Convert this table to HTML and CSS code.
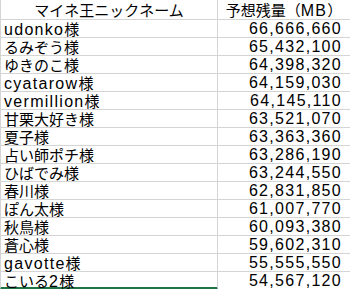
FILE: index.html
```html
<!DOCTYPE html>
<html lang="ja">
<head>
<meta charset="utf-8">
<link rel="stylesheet" href="styles.css">
</head>
<body>
<div class="sheet">
  <div class="cell head name">マイネ王ニックネーム</div>
  <div class="cell head num">予想残量（<span class="lt">MB</span>）</div>

  <div class="cell name"><span class="lt">udonko</span>様</div><div class="cell num lt">66,666,660</div>
  <div class="cell name">るみぞう様</div><div class="cell num lt">65,432,100</div>
  <div class="cell name">ゆきのこ様</div><div class="cell num lt">64,398,320</div>
  <div class="cell name"><span class="lt">cyatarow</span>様</div><div class="cell num lt">64,159,030</div>
  <div class="cell name"><span class="lt">vermillion</span>様</div><div class="cell num lt">64,145,110</div>
  <div class="cell name">甘栗大好き様</div><div class="cell num lt">63,521,070</div>
  <div class="cell name">夏子様</div><div class="cell num lt">63,363,360</div>
  <div class="cell name">占い師ポチ様</div><div class="cell num lt">63,286,190</div>
  <div class="cell name">ひばでみ様</div><div class="cell num lt">63,244,550</div>
  <div class="cell name">春川様</div><div class="cell num lt">62,831,850</div>
  <div class="cell name">ぽん太様</div><div class="cell num lt">61,007,770</div>
  <div class="cell name">秋鳥様</div><div class="cell num lt">60,093,380</div>
  <div class="cell name">蒼心様</div><div class="cell num lt">59,602,310</div>
  <div class="cell name"><span class="lt">gavotte</span>様</div><div class="cell num lt">55,555,550</div>
  <div class="cell name last">こいる<span class="lt">2</span>様</div><div class="cell num lt">54,567,120</div>
</div>
</body>
</html>
```
FILE: styles.css
```css
html, body {
  margin: 0;
  padding: 0;
  background: #ffffff;
  overflow: hidden;
}

.sheet {
  display: grid;
  grid-template-columns: 218px 140px;
  grid-template-rows: 20px;
  grid-auto-rows: 18px;
  width: 358px;
  font-family: "Noto Sans CJK JP", sans-serif;
  font-size: 15px;
  color: #000000;
}

.cell {
  box-sizing: border-box;
  border-bottom: 1px solid #d4d4d4;
  border-right: 1px solid #d4d4d4;
  line-height: 17px;
  white-space: nowrap;
}

.name {
  border-left: 1px solid #d4d4d4;
  padding-left: 3px;
}

.num {
  text-align: right;
  padding-right: 15px;
}

.head {
  height: 20px;
  line-height: 19px;
}

.head.name {
  text-align: center;
  padding: 0;
}

.head.num {
  text-align: center;
  padding: 0 7px 0 0;
}

.lt {
  font-family: "Liberation Sans", Arial, sans-serif;
  font-size: 16px;
  letter-spacing: 1.3px;
}

.last {
  border-bottom: 3px solid #217346;
}
```
